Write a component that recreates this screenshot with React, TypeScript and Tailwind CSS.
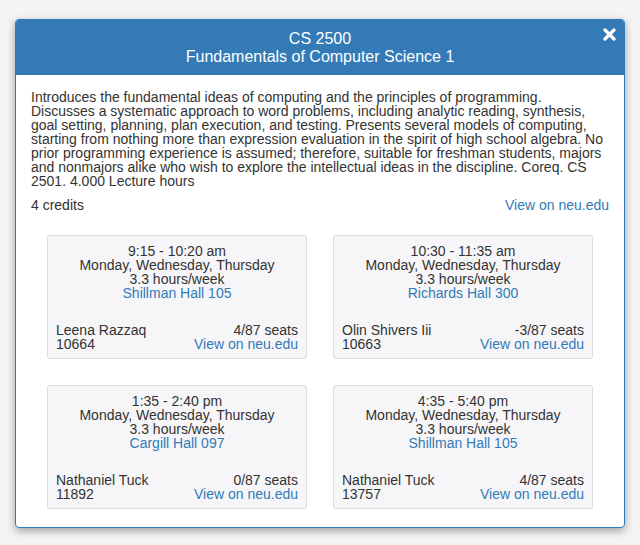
const sections = [
  {
    time: "9:15 - 10:20 am",
    days: "Monday, Wednesday, Thursday",
    hours: "3.3 hours/week",
    room: "Shillman Hall 105",
    prof: "Leena Razzaq",
    seats: "4/87 seats",
    crn: "10664",
  },
  {
    time: "10:30 - 11:35 am",
    days: "Monday, Wednesday, Thursday",
    hours: "3.3 hours/week",
    room: "Richards Hall 300",
    prof: "Olin Shivers Iii",
    seats: "-3/87 seats",
    crn: "10663",
  },
  {
    time: "1:35 - 2:40 pm",
    days: "Monday, Wednesday, Thursday",
    hours: "3.3 hours/week",
    room: "Cargill Hall 097",
    prof: "Nathaniel Tuck",
    seats: "0/87 seats",
    crn: "11892",
  },
  {
    time: "4:35 - 5:40 pm",
    days: "Monday, Wednesday, Thursday",
    hours: "3.3 hours/week",
    room: "Shillman Hall 105",
    prof: "Nathaniel Tuck",
    seats: "4/87 seats",
    crn: "13757",
  },
];

type Section = (typeof sections)[number];

const SectionCard = ({ section }: { section: Section }) => (
  <div className="rounded-[3px] border border-[#dcdcdc] bg-[#f6f6f8] px-2 pt-[8px] pb-[7px] text-[14px] leading-[14px]">
    <div className="text-center">
      <div>{section.time}</div>
      <div>{section.days}</div>
      <div>{section.hours}</div>
      <div className="text-[#337ab7]">{section.room}</div>
    </div>
    <div className="mt-[23px] flex justify-between">
      <div>
        <div>{section.prof}</div>
        <div>{section.crn}</div>
      </div>
      <div className="text-right">
        <div>{section.seats}</div>
        <div className="text-[#337ab7]">View on neu.edu</div>
      </div>
    </div>
  </div>
);

export default function App() {
  return (
    <div className="h-[545px] w-[640px] overflow-hidden bg-[#f4f4f4] pt-[19px] pl-[15px] font-['Liberation_Sans',Arial,sans-serif] text-[#333]">
      <div className="w-[610px] overflow-hidden rounded-[4px] border border-[#337ab7] bg-white shadow-[0_3px_9px_rgba(0,0,0,0.35)]">
        <div className="relative bg-[#337ab7] pt-[10px] pb-[9px] text-center text-[16px] leading-[18px] text-white">
          <div>CS 2500</div>
          <div>Fundamentals of Computer Science 1</div>
          <svg
            className="absolute top-[8px] right-[8px]"
            width="13"
            height="13"
            viewBox="0 0 13 13"
          >
            <path
              d="M2 2 L11 11 M11 2 L2 11"
              stroke="white"
              strokeWidth="3.2"
              strokeLinecap="round"
            />
          </svg>
        </div>
        <div className="px-[15px] pt-[15px] pb-[18px] text-[14px] leading-[14px]">
          <p>
            Introduces the fundamental ideas of computing and the principles of
            programming. Discusses a systematic approach to word problems,
            including analytic reading, synthesis, goal setting, planning, plan
            execution, and testing. Presents several models of computing,
            starting from nothing more than expression evaluation in the spirit
            of high school algebra. No prior programming experience is assumed;
            therefore, suitable for freshman students, majors and nonmajors
            alike who wish to explore the intellectual ideas in the discipline.
            Coreq. CS 2501. 4.000 Lecture hours
          </p>
          <div className="mt-[10px] flex justify-between">
            <span>4 credits</span>
            <span className="text-[#337ab7]">View on neu.edu</span>
          </div>
          <div className="mt-[23px] grid grid-cols-2 gap-x-[26px] gap-y-[26px] px-[16px]">
            {sections.map((s) => (
              <SectionCard key={s.crn} section={s} />
            ))}
          </div>
        </div>
      </div>
    </div>
  );
}
